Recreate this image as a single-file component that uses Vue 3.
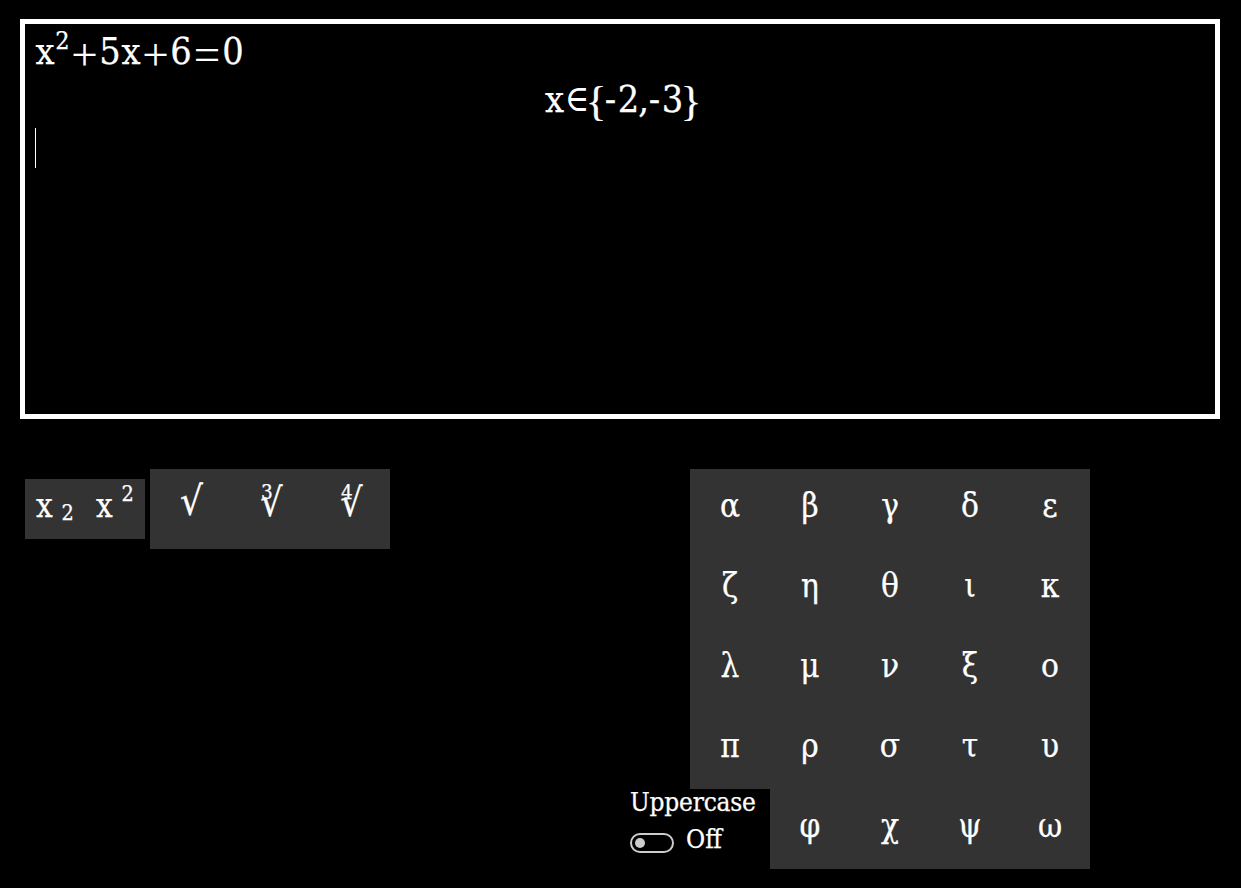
<script setup>
const equation = [
  ['x', 20], ['2', 15, 'sup'], ['+', 29, 'op'], ['5', 22], ['x', 20],
  ['+', 29, 'op'], ['6', 22], ['=', 30, 'op'], ['0', 22],
]
const solution = [
  ['x', 20], ['∈', 24, 'in'], ['{', 15, 'brace'], ['-', 14], ['2', 22],
  [',', 8], ['-', 14], ['3', 22], ['}', 15, 'brace'],
]
const roots = ['', '3', '4']
const greek = [...'αβγδεζηθικλμνξοπρστυ']
const lastRow = [...'φχψω']
</script>

<template>
  <main class="app">
    <section class="editor">
      <div class="line">
        <span v-for="(t, i) in equation" :key="i" class="tok" :class="t[2]" :style="{ width: t[1] + 'px' }">{{ t[0] }}</span>
      </div>
      <div class="line centered">
        <span v-for="(t, i) in solution" :key="i" class="tok" :class="t[2]" :style="{ width: t[1] + 'px' }">{{ t[0] }}</span>
      </div>
      <div class="caret"></div>
    </section>
    <div class="panels">
      <div class="scripts">
        <button class="script">x<span class="low">2</span></button>
        <button class="script">x<span class="high">2</span></button>
      </div>
      <div class="roots">
        <button v-for="r in roots" :key="r" class="root" :class="{ indexed: r }"><span class="radical">√</span><span v-if="r" class="index">{{ r }}</span></button>
      </div>
      <div class="greek">
        <div class="letters">
          <button v-for="g in greek" :key="g" class="key">{{ g }}</button>
        </div>
        <div class="bottom">
          <div class="case">
            <div class="label">Uppercase</div>
            <div class="switch">
              <span class="track"><span class="knob"></span></span>
              <span class="state">Off</span>
            </div>
          </div>
          <button v-for="g in lastRow" :key="g" class="key">{{ g }}</button>
        </div>
      </div>
    </div>
  </main>
</template>

<style>
body { background: #000; }
</style>

<style scoped>
* { box-sizing: border-box; }
.app {
  height: 888px;
  padding: 19px 21px 0 20px;
  overflow: hidden;
  background: #000;
  color: #fff;
  font-family: "DejaVu Serif Condensed", "DejaVu Serif", serif;
  font-stretch: condensed;
  -webkit-text-stroke: 0.25px currentColor;
}
button {
  padding: 0;
  border: 0;
  background: #333;
  color: inherit;
  font: inherit;
}
.editor {
  height: 400px;
  padding: 4px 10px 0;
  border: 5px solid #fff;
}
.line {
  display: flex;
  height: 47px;
  font-size: 37.5px;
  line-height: 47px;
}
.tok { display: flex; justify-content: center; white-space: pre; }
.sup { font-size: 25px; line-height: 25px; }
.op { font-family: "Liberation Serif", serif; font-size: 47px; line-height: 52px; -webkit-text-stroke: 0; }
.in { font-size: 37px; line-height: 48px; padding-left: 1px; -webkit-text-stroke: 0; }
.brace { font-family: "Liberation Serif", serif; font-size: 43px; line-height: 52px; }
.centered { justify-content: center; padding-left: 3px; line-height: 49px; }
.caret { width: 1px; height: 40px; margin-top: 6px; background: #fff; }
.panels { display: flex; padding: 50px 0 0 5px; }
.scripts { display: flex; margin-top: 10px; height: 60px; }
.script {
  display: flex;
  position: relative;
  width: 60px;
  height: 60px;
  padding-left: 11px;
  font-size: 33px;
  line-height: 53px;
}
.low, .high { position: absolute; left: 36.5px; font-size: 21.5px; line-height: 24px; }
.low { top: 22px; }
.high { top: 3px; }
.roots { display: flex; margin-left: 5px; height: 80px; }
.root { display: flex; justify-content: center; position: relative; width: 80px; font-size: 40px; line-height: 65px; padding-left: 3px; }
.indexed { font-size: 39px; line-height: 67px; }
.index { position: absolute; left: 31px; top: 11px; font-size: 20.5px; line-height: 24px; }
.greek { display: flex; flex-direction: column; width: 460px; margin-left: 240px; }
.letters { display: grid; grid-template-columns: repeat(5, 80px); margin-left: 60px; }
.key { width: 80px; height: 80px; padding-bottom: 7px; font-size: 33px; line-height: 73px; }
.bottom { display: flex; }
.case { width: 140px; font-size: 26px; }
.label { line-height: 27px; letter-spacing: -0.2px; }
.switch { display: flex; align-items: flex-start; gap: 12px; }
.track { width: 44px; height: 20px; margin-top: 17px; padding: 3px; border: 2px solid #ccc; border-radius: 10px; }
.knob { display: block; width: 10px; height: 10px; border-radius: 50%; background: #ccc; }
.state { line-height: 46px; }
</style>
